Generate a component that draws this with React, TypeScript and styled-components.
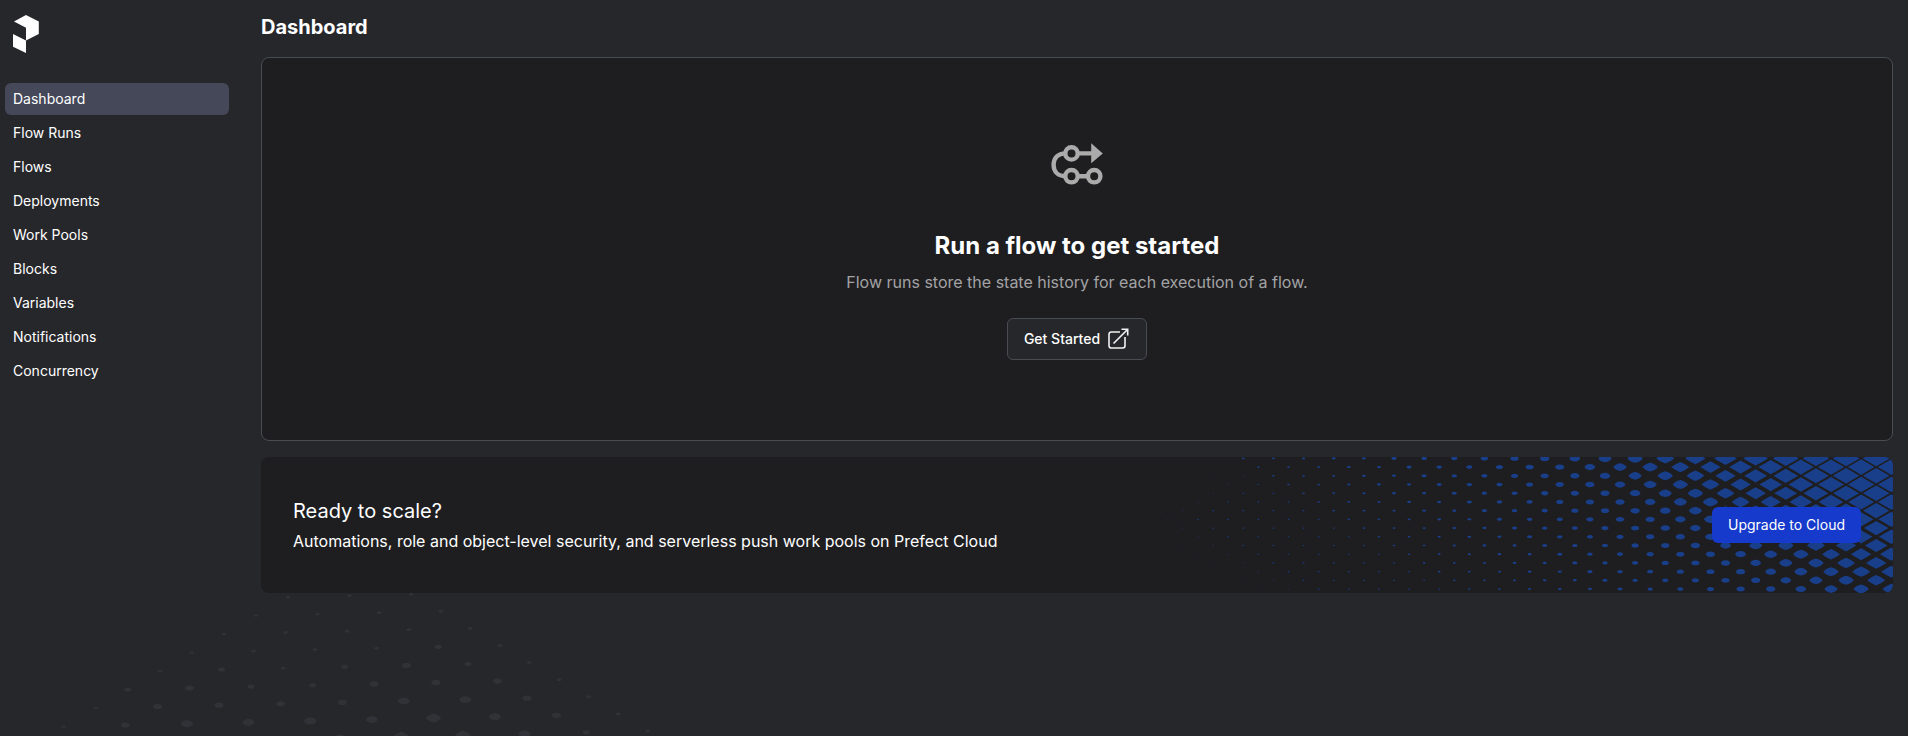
import React from "react";
import styled, { createGlobalStyle } from "styled-components";

const GlobalStyle = createGlobalStyle`
  *, *::before, *::after { box-sizing: border-box; }
  body {
    margin: 0;
    background: #26272b;
    color: #ffffff;
    font-family: Inter, "Liberation Sans", sans-serif;
    font-size: 16px;
    line-height: 24px;
  }
  h1, h2, p, ul { margin: 0; padding: 0; }
`;

const Page = styled.div`
  position: relative;
  display: grid;
  grid-template-columns: 224px minmax(0, 1fr);
  column-gap: 32px;
  min-height: 100vh;
  padding: 13px 15px 16px 5px;
  overflow: hidden;
`;

const Backdrop = styled.svg`
  position: absolute;
  left: 0;
  bottom: 0;
  pointer-events: none;
`;

const Sidebar = styled.aside`
  position: relative;
  display: flex;
  flex-direction: column;
  gap: 30px;
`;

const HomeLink = styled.a`
  display: flex;
  align-self: flex-start;
  padding: 2px 8px 0;
`;

const NavList = styled.ul`
  display: flex;
  flex-direction: column;
  gap: 2px;
  list-style: none;
`;

const NavLink = styled.a<{ $active?: boolean }>`
  display: block;
  padding: 6px 8px;
  border-radius: 6px;
  background: ${(p) => (p.$active ? "#444859" : "transparent")};
  color: #ffffff;
  font-size: 14px;
  line-height: 20px;
  text-decoration: none;
`;

const Main = styled.main`
  position: relative;
  display: flex;
  flex-direction: column;
  gap: 16px;
`;

const PageTitle = styled.h1`
  font-size: 20px;
  line-height: 28px;
  font-weight: 700;
`;

const EmptyState = styled.section`
  display: flex;
  flex-direction: column;
  align-items: center;
  padding: 80px 32px;
  border: 1px solid #4a4c54;
  border-radius: 8px;
  background: #1e1e20;
  text-align: center;
`;

const EmptyTitle = styled.h2`
  margin-top: 40px;
  font-size: 24px;
  line-height: 32px;
  font-weight: 700;
`;

const EmptyText = styled.p`
  margin-top: 8px;
  color: #a3a3a5;
`;

const GetStarted = styled.button`
  display: flex;
  align-items: center;
  gap: 6px;
  height: 42px;
  margin-top: 24px;
  padding: 0 16px;
  border: 1px solid #4a4c54;
  border-radius: 6px;
  background: #26272b;
  color: #ffffff;
  font: 500 14px/20px Inter, "Liberation Sans", sans-serif;
`;

const Banner = styled.section`
  position: relative;
  display: flex;
  align-items: center;
  justify-content: space-between;
  padding: 40px 32px;
  border-radius: 8px;
  background: #1e1e20;
  overflow: hidden;
`;

const BannerArt = styled.svg`
  position: absolute;
  top: 0;
  right: 0;
`;

const BannerCopy = styled.div`
  position: relative;
  display: flex;
  flex-direction: column;
  gap: 4px;
`;

const BannerTitle = styled.h2`
  font-size: 20px;
  line-height: 28px;
  font-weight: 400;
`;

const Upgrade = styled.button`
  position: relative;
  flex: none;
  padding: 8px 16px;
  border: 0;
  border-radius: 6px;
  background: #163acb;
  color: #ffffff;
  font: 400 14px/20px Inter, "Liberation Sans", sans-serif;
`;

const navItems = [
  "Dashboard",
  "Flow Runs",
  "Flows",
  "Deployments",
  "Work Pools",
  "Blocks",
  "Variables",
  "Notifications",
  "Concurrency",
];

/* A dot is an ellipse when small and sharpens into a diamond as it grows. */
function dotPath(x: number, y: number, w: number, h: number, sharp: number) {
  const c = 0.92 - 0.42 * sharp;
  const p = (sx: number, sy: number) => `${(x + sx * w).toFixed(2)} ${(y + sy * h).toFixed(2)}`;
  return `M${p(-1, 0)}Q${p(-c, -c)} ${p(0, -1)}Q${p(c, -c)} ${p(1, 0)}Q${p(c, c)} ${p(0, 1)}Q${p(-c, c)} ${p(-1, 0)}Z`;
}

/* Half widths by diagonal, from the dense right corner towards the left. */
const diagonalSizes = [
  13.5, 13.5, 13.4, 13.3, 13, 12.4, 11.4, 10.2, 9, 7.7, 6.6, 5.4, 4.7, 4.2, 3.7, 3.2, 2.8, 2.7, 2.1, 2, 1.6, 1.5, 1.4,
];

/* Past the last diagonal the dots fade out inside a wedge that points left. */
function fadingSize(x: number, y: number) {
  const depth = x * 0.6 - Math.abs(y - 63);
  return depth < -1 ? 0 : Math.min(0.4 + depth / 60, 1);
}

function bannerDots() {
  const dots: string[] = [];
  const width = 752;
  for (let row = 0; row < 17; row++) {
    for (let n = -1; n < 25; n++) {
      const even = row % 2 === 0;
      const x = width - 1.7 - n * 30.14 - (even ? 15.07 : 0);
      const y = 1.4 + row * 8.71;
      const diagonal = n + Math.floor((row + 1) / 2) + (even ? 1 : 0);
      const w = diagonalSizes[Math.max(diagonal, 0)] ?? fadingSize(x, y);
      if (w === 0) continue;
      const sharp = Math.min(Math.max((w - 4.5) / 6, 0), 1);
      dots.push(dotPath(x, y, w, w * 0.58, sharp));
    }
  }
  return dots.join("");
}

/* Half widths of each row of the page backdrop; a row grows by one on the left. */
const backdropRows = [
  [2.3, 2.3, 2.3],
  [2.3, 2.3, 2.6, 2.6],
  [2.3, 2.6, 2.6, 2.6, 2.6],
  [2.3, 2.6, 2.5, 2.6, 3.6, 2.6],
  [2.3, 3.6, 2.6, 3.6, 4.6, 3.6, 2.6],
  [3.6, 4.6, 3.6, 3.6, 4.6, 4.6, 4.6, 2.6],
  [2.3, 4.6, 4.6, 4.6, 4.6, 6, 6.2, 4.6, 2.6],
  [2.3, 4.6, 6.2, 6.2, 6.2, 6.2, 7.8, 6.2, 4.6, 2.6],
  [2.3, 4.6, 6.2, 6.2, 6.2, 6.2, 9, 8, 6.2, 3.6, 2.6],
];

function backdropDots() {
  return backdropRows
    .map((row, b) =>
      row
        .map((w, i) => {
          const a = i - (row.length - 3);
          const sharp = Math.min(Math.max((w - 5) / 5, 0), 1);
          return dotPath(288 + a * 61.6 + b * 29.57, 27 - a * 1.4 + b * 17.1, w, w * 0.58, sharp);
        })
        .join("")
    )
    .join("");
}

function Logo() {
  return (
    <svg width="26" height="38" viewBox="0 0 26 38" fill="#ffffff" aria-hidden="true">
      <path d="M1 6.4 13 0l12.8 6.4v12.7L13 25.4V12.7z" />
      <path d="M0 19.1l13 6.3V38L0 31.7z" />
    </svg>
  );
}

function FlowIcon() {
  return (
    <svg width="52" height="52" viewBox="0 0 52 52" fill="none" stroke="#ababab" strokeWidth="4.4" aria-hidden="true">
      <circle cx="20.5" cy="15.4" r="6.2" />
      <circle cx="20.5" cy="38.2" r="6.2" />
      <circle cx="43.2" cy="38.2" r="6.2" />
      <path d="M26.5 15.4H42M26.5 38.2h11M14.3 15.4C7 15.4 2.6 20 2.6 26.8S7 38.2 14.3 38.2" />
      <path d="M40.2 5.2 51.8 15.4 40.2 25.2z" fill="#ababab" stroke="none" />
    </svg>
  );
}

function ExternalIcon() {
  return (
    <svg width="24" height="24" viewBox="0 0 24 24" fill="none" stroke="#f1f1f1" strokeWidth="1.6" aria-hidden="true">
      <path d="M14 5H5.2A2.2 2.2 0 0 0 3 7.2v11.6A2.2 2.2 0 0 0 5.2 21h11.6a2.2 2.2 0 0 0 2.2-2.2V10" />
      <path d="M7.5 16.5 21.5 2.5M15.5 2.3h6.2v6.2" />
    </svg>
  );
}

export default function App() {
  return (
    <>
      <GlobalStyle />
      <Page>
        <Backdrop width="700" height="166" viewBox="0 0 700 166" aria-hidden="true">
          <path d={backdropDots()} fill="#313237" />
        </Backdrop>
        <Sidebar>
          <HomeLink href="#" aria-label="Home">
            <Logo />
          </HomeLink>
          <nav>
            <NavList>
              {navItems.map((item, index) => (
                <li key={item}>
                  <NavLink href="#" $active={index === 0} aria-current={index === 0 ? "page" : undefined}>
                    {item}
                  </NavLink>
                </li>
              ))}
            </NavList>
          </nav>
        </Sidebar>
        <Main>
          <PageTitle>Dashboard</PageTitle>
          <EmptyState>
            <FlowIcon />
            <EmptyTitle>Run a flow to get started</EmptyTitle>
            <EmptyText>Flow runs store the state history for each execution of a flow.</EmptyText>
            <GetStarted type="button">
              Get Started
              <ExternalIcon />
            </GetStarted>
          </EmptyState>
          <Banner>
            <BannerArt width="752" height="136" viewBox="0 0 752 136" aria-hidden="true">
              <path d={bannerDots()} fill="#1a3f8a" />
            </BannerArt>
            <BannerCopy>
              <BannerTitle>Ready to scale?</BannerTitle>
              <p>Automations, role and object-level security, and serverless push work pools on Prefect Cloud</p>
            </BannerCopy>
            <Upgrade type="button">Upgrade to Cloud</Upgrade>
          </Banner>
        </Main>
      </Page>
    </>
  );
}
